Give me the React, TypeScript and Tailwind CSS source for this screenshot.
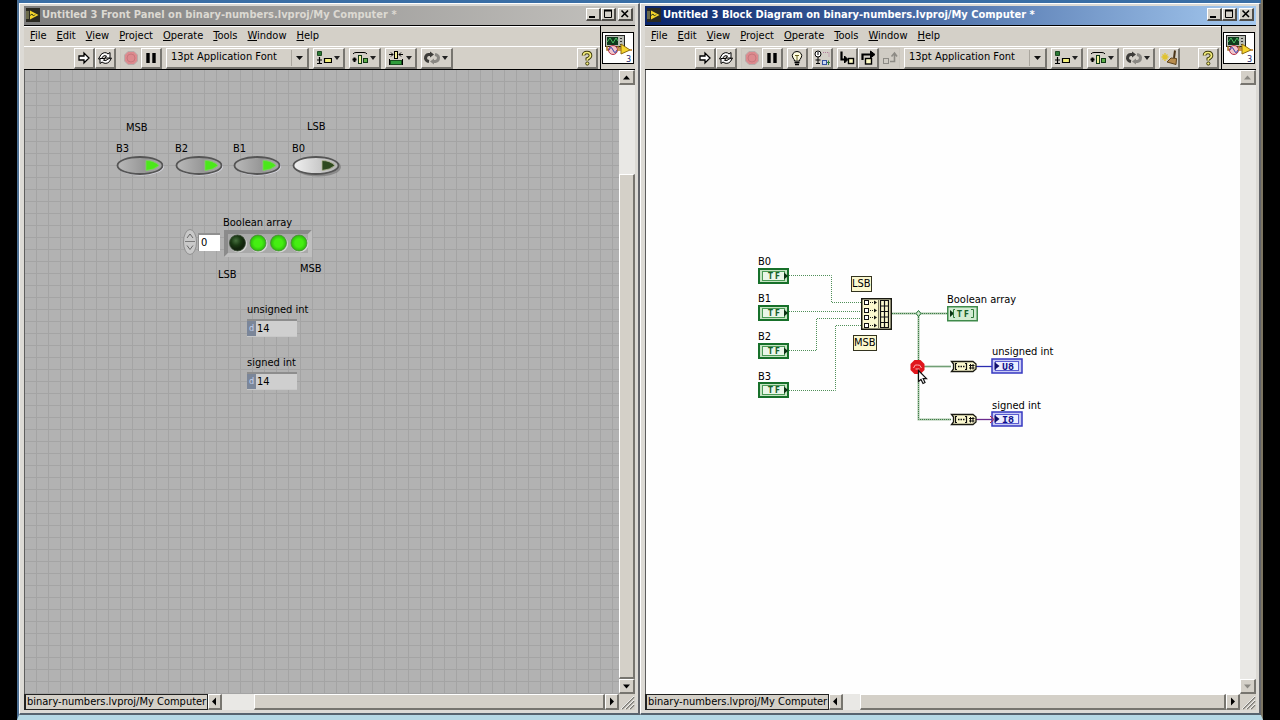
import type { ReactNode } from "react";

const menuItems = ["File", "Edit", "View", "Project", "Operate", "Tools", "Window", "Help"];

const raised =
  "border-t border-l border-t-white border-l-white border-r-2 border-b-2 border-r-[#77756f] border-b-[#77756f] bg-[#d4d0c8]";

function LabviewLogo() {
  return (
    <svg width="14" height="14" viewBox="0 0 14 14" aria-hidden="true">
      <rect width="14" height="14" fill="#2b2a22" />
      <rect x="0" y="3" width="3" height="8" fill="#6b6a4a" />
      <path d="M4 2.500 L12.500 7 L4 11.500 Z" fill="#f4d32b" />
      <path d="M4 7.500 L6 6 L7.500 8 L9 6.500" fill="none" stroke="#35401c" />
    </svg>
  );
}

function TitleButton({ label, children }: { label: string; children: ReactNode }) {
  return (
    <button type="button" aria-label={label} className="h-[13px] w-[15px] border-t border-l border-white border-r-2 border-b-2 border-r-[#504e4a] border-b-[#504e4a] bg-[#d4d0c8]">
      <svg width="12" height="10" viewBox="0 0 12 10" fill="none" stroke="#000">
        {children}
      </svg>
    </button>
  );
}

function TitleBar({ title, active }: { title: string; active?: boolean }) {
  return (
    <div
      className={`flex h-[19px] shrink-0 items-center gap-[2px] px-[2px] pb-[2px] ${
        active
          ? "bg-linear-to-r from-[#0a246a] to-[#a6caf0] text-white"
          : "bg-linear-to-r from-[#7d7d7d] to-[#c4c2be] text-[#dcd9d2]"
      }`}
    >
      <LabviewLogo />
      <h1 className="flex-1 truncate text-[11px] leading-[14px] font-bold">{title}</h1>
      <div className="flex items-center">
        <TitleButton label="Minimize">
          <path d="M2 8 H8" strokeWidth="2" />
        </TitleButton>
        <TitleButton label="Maximize">
          <path d="M2 1.5 H10" strokeWidth="2" />
          <path d="M2.5 1 V8.5 H9.5 V1" />
        </TitleButton>
      </div>
      <TitleButton label="Close">
        <path d="M2.5 1.5 L9 8 M9 1.5 L2.5 8" strokeWidth="1.6" />
      </TitleButton>
    </div>
  );
}

function Tool({ label, children, menu, flat }: { label: string; children: ReactNode; menu?: boolean; flat?: boolean }) {
  return (
    <button
      type="button"
      aria-label={label}
      className={`flex h-[21px] shrink-0 items-center justify-center ${menu ? "w-8" : "w-[21px]"} ${
        flat ? "border border-[#c9c5bd] bg-[#d0ccc4]" : raised
      }`}
    >
      <svg width="16" height="16" viewBox="0 0 16 16" fill="none" stroke="#000" className="shrink-0">
        {children}
      </svg>
      {menu && (
        <svg width="9" height="16" viewBox="0 0 9 16" className="shrink-0">
          <path d="M2 6 H8 L5 10 Z" fill="#222" />
        </svg>
      )}
    </button>
  );
}

function RunTools() {
  return (
    <>
      <div className="flex">
        <Tool label="Run">
          <path d="M3 6 H8 V3 L13 8 L8 13 V10 H3 Z" fill="#fff" strokeWidth="1.3" />
        </Tool>
        <Tool label="Run Continuously">
          <path d="M1.5 9 L4 4.5 Q8 1 11 4 L13 2.5 V8 H8 L9.5 6 Q7 4.5 5 7.5 L4 9 Z" fill="#fff" />
          <path d="M14.5 8 L12.5 11.5 Q9 15 5 12 L3 13.5 V8.5 H8 L6.5 10.3 Q9 11.5 11 9 Z" fill="#fff" />
        </Tool>
      </div>
      <div className="flex">
        <Tool label="Abort Execution" flat>
          <path d="M5 1.5 H11 L14.5 5 V11 L11 14.5 H5 L1.5 11 V5 Z" fill="#dd8a8e" stroke="#b7adab" />
          <circle cx="8" cy="8" r="4" stroke="#c7787d" />
        </Tool>
        <Tool label="Pause">
          <path d="M5 3 V13 M11 3 V13" strokeWidth="3.4" />
        </Tool>
      </div>
    </>
  );
}

function AlignIcon() {
  return (
    <>
      <path d="M1.500 1.500 H5.500 V5.500 H1.500 Z" fill="#2c7a35" stroke="#1d4a22" />
      <path d="M3.500 7 V14 M1 10 H6 M1 13.500 H6" strokeWidth="1.200" />
      <path d="M8.500 8.500 H15.500 V12.500 H8.500 Z" fill="#f3ef7a" strokeWidth="1.200" />
    </>
  );
}

function DistributeIcon() {
  return (
    <>
      <path d="M1 4 Q2 2.500 4 2.500 H12 Q14 2.500 15 4" />
      <path d="M0.500 9.500 H4.500 M2.500 7.500 V12" strokeWidth="2" />
      <rect x="6.500" y="5.500" width="3" height="8" fill="#f3ef9a" stroke="#0f3a14" />
      <rect x="11.500" y="8.500" width="4" height="4" fill="#5fae4a" stroke="#0f3a14" />
    </>
  );
}

function ResizeIcon() {
  return (
    <>
      <path d="M1 4.500 H5 M3 2.500 L5 4.500 L3 6.500 M15 4.500 H11 M13 2.500 L11 4.500 L13 6.500" />
      <rect x="6.500" y="1.500" width="3" height="7" fill="#f3ef9a" />
      <rect x="2.500" y="10.500" width="11" height="4" fill="#2f9c3a" stroke="#174d1d" />
      <path d="M1.500 9 V15 M14.500 9 V15" />
    </>
  );
}

function ReorderIcon() {
  return (
    <>
      <path d="M7 4.500 H4.500 Q1.500 5 1.500 8.500 Q2 11 5 11.500" stroke="#3d3c39" strokeWidth="3" />
      <path d="M9 11.500 H11.500 Q14.500 11 14.500 7.500 Q14 5 11 4.500" stroke="#8a8883" strokeWidth="3" />
      <path d="M6 1.500 L10 4.500 L6 7.500 Z" fill="#3d3c39" stroke="none" />
      <path d="M10 8.500 L6 11.500 L10 14.500 Z" fill="#8a8883" stroke="none" />
    </>
  );
}

function HelpTool() {
  return (
    <Tool label="Show Context Help">
      <path d="M4.500 5.500 Q4.500 2.500 8 2.500 Q11.500 2.500 11.500 5.500 Q11.500 7.500 8.300 9 V10.500" stroke="#3c3908" strokeWidth="3.600" />
      <path d="M4.500 5.500 Q4.500 2.500 8 2.500 Q11.500 2.500 11.500 5.500 Q11.500 7.500 8.300 9 V10.500" stroke="#f3ec7e" strokeWidth="1.700" />
      <circle cx="8.300" cy="13.500" r="1.600" fill="#f3ec7e" stroke="#3c3908" />
    </Tool>
  );
}

function FontSelect() {
  return (
    <div className={`relative h-[21px] w-[143px] shrink-0 ${raised}`}>
      <select aria-label="Text Settings" className="block h-full w-full appearance-none pl-1 pb-[2px] text-[11px] leading-[14px] outline-none">
        <option>13pt Application Font</option>
      </select>
      <svg width="16" height="18" viewBox="0 0 16 18" className="pointer-events-none absolute top-0 right-0">
        <path d="M0.500 1 V17" stroke="#aaa69e" />
        <path d="M5 7 H12 L8.500 11 Z" fill="#111" />
      </svg>
    </div>
  );
}

function ViIcon() {
  return (
    <svg width="32" height="32" viewBox="0 0 32 32" role="img" aria-label="VI icon">
      <rect x="0.5" y="0.5" width="31" height="31" fill="#fff" stroke="#000" />
      <rect x="3.5" y="3.5" width="19" height="11" fill="#b9bdb4" stroke="#222" />
      <rect x="5" y="5" width="11" height="8" fill="#0e3a1d" />
      <path d="M5 10 L8 6 L11 11 L14 6 L16 9" fill="none" stroke="#4dbb62" />
      <path d="M19 6 V7 M19 9 V10 M19 12 V13" stroke="#333" strokeWidth="2" />
      <path d="M5 14 V18 H9 M16 14 V16 H20" fill="none" stroke="#a3701d" strokeWidth="1.5" />
      <circle cx="11" cy="18" r="4.500" fill="#f2c5cb" stroke="#b63346" />
      <path d="M7 18 Q9 13 11 18 T15 18" fill="none" stroke="#2e3fae" />
      <path d="M19 12 L28 18 L19 22 Z" fill="#f6d52e" stroke="#8c6a10" />
      <path d="M15 18 H19 M28 18 H30" stroke="#b8741a" strokeWidth="1.5" />
      <text x="24" y="29.500" fontSize="9" fill="#26266e">3</text>
    </svg>
  );
}

function Header({ children }: { children: ReactNode }) {
  return (
    <header className="flex shrink-0 border-t border-b border-black">
      <div className="min-w-0 flex-1">
        <nav className="flex h-5 items-center gap-[10px] border-t border-white pb-[2px] pl-[6px]">
          {menuItems.map((item) => (
            <a key={item} href={`#${item.toLowerCase()}`} className="text-[11px] leading-[14px]">
              <span className="underline">{item[0]}</span>
              {item.slice(1)}
            </a>
          ))}
        </nav>
        <div className="flex h-[23px] items-center gap-1 border-t border-white pl-[50px] pr-[2px]">{children}</div>
      </div>
      <div className="flex w-[35px] shrink-0 justify-center border-l border-black pt-[6px]">
        <ViIcon />
      </div>
    </header>
  );
}

function ScrollButton({ label, d, disabled, wide }: { label: string; d: string; disabled?: boolean; wide?: boolean }) {
  return (
    <button type="button" aria-label={label} disabled={disabled} className={`flex shrink-0 items-center justify-center ${raised} ${wide ? "h-[15px] w-4" : "h-4 w-[14px]"}`}>
      <svg width="9" height="9" viewBox="0 0 9 9">
        <path d={d} fill={disabled ? "#8b8983" : "#000"} />
      </svg>
    </button>
  );
}

function VerticalScroll({ active }: { active?: boolean }) {
  return (
    <div className="flex w-4 shrink-0 flex-col bg-[#e9e8e5]">
      <ScrollButton wide label="Scroll up" d="M1 6.500 L4.500 2.500 L8 6.500 Z" disabled={!active} />
      <div className="h-[89px] shrink-0" />
      <div className={`flex-1 ${active ? raised : ""}`} />
      <ScrollButton wide label="Scroll down" d="M1 2.500 L4.500 6.500 L8 2.500 Z" disabled={!active} />
    </div>
  );
}

function StatusBar({ gap }: { gap: string }) {
  return (
    <footer className="flex h-4 shrink-0 bg-[#e9e8e5]">
      <p className="flex shrink-0 items-center border border-l-2 border-[#222] bg-[#d4d0c8] px-px text-[11px] leading-[14px]">
        binary-numbers.lvproj/My Computer
      </p>
      <ScrollButton label="Scroll left" d="M6 0.500 L2 4.500 L6 8.500 Z" />
      <div className={`shrink-0 ${gap}`} />
      <div className={`flex-1 ${raised}`} />
      <ScrollButton label="Scroll right" d="M3 0.500 L7 4.500 L3 8.500 Z" />
      <svg width="16" height="16" viewBox="0 0 16 16" className="shrink-0 bg-[#d4d0c8]">
        <path d="M3 15 L15 3 M7 15 L15 7 M11 15 L15 11" stroke="#7b7974" strokeWidth="1.500" />
        <path d="M2 15 L15 2 M6 15 L15 6 M10 15 L15 10" stroke="#fff" strokeWidth="0.800" />
      </svg>
    </footer>
  );
}

function AppWindow({ title, active, tools, gap, children }: { title: string; active?: boolean; tools: ReactNode; gap: string; children: ReactNode }) {
  return (
    <section className="flex min-w-0 flex-1 flex-col border-t border-l border-white border-r-2 border-b-2 border-r-[#63656a] border-b-[#56636e] bg-[#dcdad5] pt-[2px] pr-[3px] pb-[3px] pl-1">
      <TitleBar title={title} active={active} />
      <div className="flex min-h-0 flex-1 flex-col bg-[#d4d0c8]">
        <Header>{tools}</Header>
        <div className="flex min-h-0 flex-1">
          {children}
          <VerticalScroll active={!active} />
        </div>
        <StatusBar gap={gap} />
      </div>
    </section>
  );
}

function Label({ at, children }: { at: string; children: ReactNode }) {
  return <span className={`absolute text-[11px] leading-[14px] whitespace-nowrap ${at}`}>{children}</span>;
}

function BoolButton({ name, on, at }: { name: string; on: boolean; at: string }) {
  return (
    <div className={`absolute ${at}`}>
      <span id={`bool-${name}`} className="block text-[11px] leading-[14px]">{name}</span>
      <button type="button" aria-labelledby={`bool-${name}`} aria-pressed={on} className="block">
        <svg width="50" height="22" viewBox="0 0 50 22">
          {on ? (
            <ellipse cx="25" cy="10.500" rx="23" ry="9" fill="#d9d9e2" />
          ) : (
            <ellipse cx="26" cy="11" rx="23" ry="9.500" fill="#8a8a8a" />
          )}
          <ellipse cx="24" cy="9.500" rx="22.500" ry="8.500" fill={on ? "url(#ovalOn)" : "url(#ovalOff)"} stroke="#555" strokeWidth="1.800" />
          <path d="M30 4.500 Q38 4.500 43 9.500 Q38 14 30 14.500 Z" fill={on ? "#4be81a" : "#2f4a1f"} stroke={on ? "#7fd463" : "#b5b898"} strokeWidth="0.800" />
        </svg>
      </button>
    </div>
  );
}

function NumericIndicator({ id, name, at }: { id: string; name: string; at: string }) {
  return (
    <div className={`absolute flex flex-col gap-[2px] ${at}`}>
      <label htmlFor={id} className="text-[11px] leading-[14px] whitespace-nowrap">{name}</label>
      <div className="flex h-[18px] w-[50px] border-t-2 border-[#8d8d8d] border-b border-b-[#c8c8c8]">
        <span className="w-[9px] shrink-0 bg-[#7b8699] text-center text-[9px] leading-[15px] text-[#c6d3ee]">d</span>
        <input id={id} readOnly defaultValue="14" className="w-full min-w-0 bg-[#cfcfcf] pl-px text-[11px] leading-[14px] outline-none" />
      </div>
    </div>
  );
}

const leds = [false, true, true, true];

function FrontPanel() {
  return (
    <main className="relative min-w-0 flex-1 overflow-hidden border-l border-[#5d5d5d] bg-[#b2b2b2] bg-[linear-gradient(to_right,#a4a4a4_1px,transparent_1px),linear-gradient(to_bottom,#a4a4a4_1px,transparent_1px)] bg-size-[12px_12px] bg-position-[11px_11px]">
      <Label at="left-[101px] top-[51px]">MSB</Label>
      <Label at="left-[282px] top-[50px]">LSB</Label>
      <svg width="0" height="0" className="absolute">
        <defs>
          <linearGradient id="ovalOn">
            <stop offset="0" stopColor="#b9b9b9" />
            <stop offset="0.600" stopColor="#969696" />
            <stop offset="1" stopColor="#a8a8a8" />
          </linearGradient>
          <linearGradient id="ovalOff">
            <stop offset="0" stopColor="#f0f0f0" />
            <stop offset="0.600" stopColor="#c9c9c9" />
            <stop offset="1" stopColor="#b4b4b4" />
          </linearGradient>
          <radialGradient id="ledOn">
            <stop offset="0.500" stopColor="#45ee12" />
            <stop offset="1" stopColor="#2cb80c" />
          </radialGradient>
          <radialGradient id="ledOff" cx="0.400" cy="0.350">
            <stop offset="0" stopColor="#47703f" />
            <stop offset="0.600" stopColor="#1b3a14" />
            <stop offset="1" stopColor="#12240d" />
          </radialGradient>
        </defs>
      </svg>
      <BoolButton name="B3" on at="left-[91px] top-[72px]" />
      <BoolButton name="B2" on at="left-[150px] top-[72px]" />
      <BoolButton name="B1" on at="left-[208px] top-[72px]" />
      <BoolButton name="B0" on={false} at="left-[267px] top-[72px]" />

      <Label at="left-[198px] top-[146px]">Boolean array</Label>
      <div className="absolute left-[157px] top-[156px] flex items-center">
        <svg width="16" height="28" viewBox="0 0 16 28">
          <ellipse cx="8" cy="14" rx="6.500" ry="12.500" fill="#c9c9c9" stroke="#8f8f8f" />
          <path d="M3 13.500 H13" stroke="#7b7b7b" />
          <path d="M5 10 L8 6 L11 10 M5 17.500 L8 21.500 L11 17.500" fill="none" stroke="#666" />
        </svg>
        <input aria-label="Array index" defaultValue="0" className="h-[18px] w-[22px] border-t-2 border-l border-[#909090] bg-white pl-[2px] text-[11px] leading-[14px] outline-none" />
        <svg width="88" height="27" viewBox="0 0 88 27" className="mt-1 ml-1" role="img" aria-label="Boolean array values">
          <rect width="88" height="27" fill="#a9a9a9" />
          <path d="M0 27 V0 H88 L84 4 H4 V23 Z" fill="#8b8b8b" />
          <path d="M0 27 H88 V0 L84 4 V23 H4 Z" fill="#bfbfbf" />
          {leds.map((on, i) => (
            <g key={i}>
              <circle cx={14.500 + i * 20.500} cy="14" r="8.500" fill="#d6d6d6" />
              <circle cx={13.500 + i * 20.500} cy="13" r="8" fill={on ? "url(#ledOn)" : "url(#ledOff)"} stroke={on ? "#4c8a3c" : "#3a4a36"} strokeWidth="0.800" />
            </g>
          ))}
        </svg>
      </div>
      <Label at="left-[193px] top-[198px]">LSB</Label>
      <Label at="left-[275px] top-[192px]">MSB</Label>
      <NumericIndicator id="unsigned" name="unsigned int" at="left-[222px] top-[233px]" />
      <NumericIndicator id="signed" name="signed int" at="left-[222px] top-[286px]" />
    </main>
  );
}

const boolTerminals = [198, 235, 273, 312];

function BoolTerminal({ y }: { y: number }) {
  return (
    <g transform={`translate(112 ${y})`}>
      <rect x="1" y="1" width="29" height="14" fill="#c6e4c3" stroke="#17702a" strokeWidth="2" />
      <rect x="4.500" y="3.500" width="22" height="9" fill="#eaf6e8" stroke="#4a9a56" />
      <text x="10" y="11" fontSize="8" fontWeight="bold" fill="#17602a">T</text>
      <text x="17" y="11" fontSize="8" fontWeight="bold" fill="#17602a">F</text>
      <path d="M26 4.500 L30 8 L26 11.500 Z" fill="#0c3314" />
    </g>
  );
}

function ConvertNode({ y }: { y: number }) {
  return (
    <g transform={`translate(305 ${y})`}>
      <path d="M0.500 0.500 H22 L25 3 V8 L22 10.500 H0.500 L2.500 8 V3 Z" fill="#fbf8cf" stroke="#1a1a12" strokeWidth="1.300" />
      <path d="M6 2.500 H4.500 V8.500 H6 M14 2.500 H15.500 V8.500 H14" fill="none" stroke="#111" strokeWidth="1.200" />
      <path d="M7 5.500 H14" stroke="#111" strokeWidth="1.600" strokeDasharray="1.500 1" />
      <path d="M19.500 3 V8.500 M22 3 V8.500 M18 4.500 H23.500 M18 7 H23.500" stroke="#111" />
    </g>
  );
}

function IntTerminal({ y, type }: { y: number; type: string }) {
  return (
    <g transform={`translate(345 ${y})`}>
      <rect x="1" y="1" width="30" height="14" fill="#c9cbf5" stroke="#3638c0" strokeWidth="1.500" />
      <rect x="4.500" y="3.500" width="23" height="9" fill="#eceeff" stroke="#5a5cd0" />
      <path d="M3.500 4 L8.500 8 L3.500 12 Z" fill="#10106e" />
      <text x="11" y="11.500" fontSize="10" fontWeight="bold" fontFamily="Liberation Mono, monospace" fill="#10108c">{type}</text>
    </g>
  );
}

function BlockDiagram() {
  return (
    <main className="relative min-w-0 flex-1 overflow-hidden border-l border-[#5d5d5d] bg-[#fefefe]">
      <svg width="400" height="370" viewBox="0 0 400 370" className="absolute top-0 left-0">
        <g fill="none" stroke="#4f8f58" strokeDasharray="1 1">
          <path d="M143 205.500 H185.500 V232.500 H215" />
          <path d="M143 241.500 H215" />
          <path d="M143 280.500 H170.500 V248.500 H215" />
          <path d="M143 320.500 H189.500 V255.500 H215" />
        </g>
        <g fill="none" stroke="#a3c2a3" strokeWidth="2">
          <path d="M246 243.500 H301 M272.500 243 V349.500 H305 M272.500 296.500 H305" />
        </g>
        <g fill="none" stroke="#3f7d48" strokeDasharray="1 1">
          <path d="M246 243.500 H301 M272.500 243 V349.500 H305 M272.500 296.500 H305" />
        </g>
        <path d="M330 296.500 H346" stroke="#2a2cb0" strokeWidth="1.300" />
        <path d="M330 349.500 H346" stroke="#6a2a8c" strokeWidth="1.300" />
        <path d="M272.500 240.500 L275 243.500 L272.500 246.500 L270 243.500 Z" fill="#cfe8cf" stroke="#1f7030" />
        {boolTerminals.map((y) => (
          <BoolTerminal key={y} y={y} />
        ))}

        {/* build array */}
        <g transform="translate(215 228)">
          <rect x="0.750" y="0.750" width="29.500" height="30.500" fill="#fbf8cf" stroke="#1a1a12" strokeWidth="1.500" />
          {[4, 12, 19, 27].map((y) => (
            <g key={y}>
              <rect x="3.500" y={y - 1.500} width="4" height="4" fill="#fff" stroke="#111" />
              <path d={`M9 ${y + 0.500} H13`} stroke="#222" strokeDasharray="1 1" />
              <path d={`M13 ${y - 1.500} L16 ${y + 0.500} L13 ${y + 2.500} Z`} fill="#111" />
            </g>
          ))}
          <path d="M17.500 2 V30" stroke="#77755f" />
          <path d="M19.500 2.500 H27.500 V29.500 H19.500 Z M23.500 2.500 V29.500 M19.500 8 H27.500 M19.500 13.500 H27.500 M19.500 19 H27.500 M19.500 24.500 H27.500" fill="none" stroke="#111" strokeWidth="1.200" />
        </g>

        {/* boolean array indicator */}
        <g transform="translate(301 236)">
          <rect x="0.750" y="0.750" width="29.500" height="14" fill="#d3ecd2" stroke="#3f8a4b" strokeWidth="1.500" />
          <path d="M3 4 L7 7.500 L3 11 Z" fill="#0c3314" />
          <path d="M8 3.500 H6.500 V11.500 H8 M24 3.500 H26.500 V11.500 H24" fill="none" stroke="#2f7a3a" />
          <text x="10" y="11" fontSize="8" fontWeight="bold" fill="#17602a">T</text>
          <text x="17" y="11" fontSize="8" fontWeight="bold" fill="#17602a">F</text>
        </g>
        <ConvertNode y={291} />
        <ConvertNode y={344} />
        <IntTerminal y={288} type="U8" />
        <IntTerminal y={341} type="I8" />
        <path d="M344 346 L348 349.500 L344 353" fill="none" stroke="#c0203a" />

        {/* probe marker and pointer */}
        <path d="M268.500 290 H274.500 L278.500 294 V300 L274.500 304 H268.500 L264.500 300 V294 Z" fill="#e0161c" />
        <path d="M267.500 298 Q269 293.500 271.500 295 Q274 294 275.500 298 M269.500 299 H273.500" fill="none" stroke="#ffb0b0" />
        <path d="M272.500 300.500 V311.500 L275 309.500 L277 313.500 L279 312.500 L277.200 308.700 H280.500 Z" fill="#fff" stroke="#111" strokeWidth="1.200" />
      </svg>
      <Label at="left-[112px] top-[185px]">B0</Label>
      <Label at="left-[112px] top-[222px]">B1</Label>
      <Label at="left-[112px] top-[260px]">B2</Label>
      <Label at="left-[112px] top-[300px]">B3</Label>
      <Label at="left-[205px] top-[206px] border border-[#33331f] bg-[#fbf8cf]">LSB</Label>
      <Label at="left-[207px] top-[265px] border border-[#33331f] bg-[#fbf8cf]">MSB</Label>
      <Label at="left-[301px] top-[223px]">Boolean array</Label>
      <Label at="left-[346px] top-[275px]">unsigned int</Label>
      <Label at="left-[346px] top-[329px]">signed int</Label>
    </main>
  );
}

export default function App() {
  return (
    <div className="flex h-screen flex-col overflow-hidden bg-black px-[17px] font-['DejaVu_Sans_Condensed','DejaVu_Sans',sans-serif] text-black">
      <div className="flex min-h-0 flex-1 border-r-2 border-l-2 border-l-[#4c6f93] border-r-[#7c7562] border-b-[5px] border-b-[#b5d8e4] bg-[#3a6ea5] pt-[3px]">
        <AppWindow
          title="Untitled 3 Front Panel on binary-numbers.lvproj/My Computer *"
          gap="w-8"
          tools={
            <>
              <RunTools />
              <FontSelect />
              <Tool label="Align Objects" menu><AlignIcon /></Tool>
              <Tool label="Distribute Objects" menu><DistributeIcon /></Tool>
              <Tool label="Resize Objects" menu><ResizeIcon /></Tool>
              <Tool label="Reorder" menu><ReorderIcon /></Tool>
              <div className="flex-1" />
              <HelpTool />
            </>
          }
        >
          <FrontPanel />
        </AppWindow>
        <AppWindow
          active
          title="Untitled 3 Block Diagram on binary-numbers.lvproj/My Computer *"
          gap="w-[17px]"
          tools={
            <>
              <RunTools />
              <Tool label="Highlight Execution">
                <path d="M5.500 11 Q5.500 9.500 4 8 Q2.500 5.500 4 3.500 Q5.500 1.500 8 1.500 Q10.500 1.500 12 3.500 Q13.500 5.500 12 8 Q10.500 9.500 10.500 11 Z" fill="#fffde0" />
                <path d="M6 5 L7 6 L8 5 L9 6 L10 5 M8 6 V10" stroke="#6b6420" />
                <path d="M5.500 12.500 H10.500 M6 14.500 H10" strokeWidth="1.500" />
              </Tool>
              <Tool label="Retain Wire Values">
                <circle cx="4" cy="4" r="3" fill="#fff" />
                <path d="M4 2 V5 M4 7 V14 M1.500 10 H6.500 M2 13.500 H6" />
                <path d="M9 2.500 H15 V7" stroke="#b27a9a" strokeDasharray="1 1" />
                <path d="M8 12.500 H10 M13 12.500 H16 M14.500 10.500 V15" stroke="#2f7a3a" />
                <rect x="8.500" y="10.500" width="4" height="4" fill="#c9d6f4" stroke="#3350a0" />
              </Tool>
              <div className="flex">
                <Tool label="Step Into">
                  <path d="M2.500 1.500 V9.500 H6" strokeWidth="2.200" />
                  <path d="M5.500 6 L9 9.500 L5.500 13 Z" fill="#000" />
                  <rect x="9.500" y="8.500" width="5" height="5" fill="#fdfac2" strokeWidth="1.400" />
                </Tool>
                <Tool label="Step Over">
                  <path d="M2.500 10 V4.500 H11" strokeWidth="2.200" />
                  <path d="M10.500 1 L15 4.500 L10.500 8 Z" fill="#000" />
                  <rect x="5.500" y="8.500" width="6" height="5.500" fill="#fdfac2" strokeWidth="1.400" />
                </Tool>
                <Tool label="Step Out" flat>
                  <rect x="1.500" y="8.500" width="5" height="5" stroke="#8d8b85" />
                  <path d="M8 11.500 H12.500 V4 M9.500 6.500 L12.500 3 L15 6.500" stroke="#8d8b85" strokeWidth="1.600" />
                </Tool>
              </div>
              <FontSelect />
              <Tool label="Align Objects" menu><AlignIcon /></Tool>
              <Tool label="Distribute Objects" menu><DistributeIcon /></Tool>
              <Tool label="Reorder" menu><ReorderIcon /></Tool>
              <Tool label="Clean Up Diagram">
                <path d="M4 3 V11 M0.500 7 H7.500 M1.500 4.500 L6.500 9.500 M6.500 4.500 L1.500 9.500" stroke="#e0c22c" strokeWidth="1.300" />
                <path d="M14 0.500 L13 8" stroke="#4a3417" strokeWidth="2" />
                <path d="M10 8 L15.500 8.500 L15 14.500 L6 12 Z" fill="#b98d4d" stroke="#5e431c" />
              </Tool>
              <div className="flex-1" />
              <HelpTool />
            </>
          }
        >
          <BlockDiagram />
        </AppWindow>
      </div>
    </div>
  );
}
